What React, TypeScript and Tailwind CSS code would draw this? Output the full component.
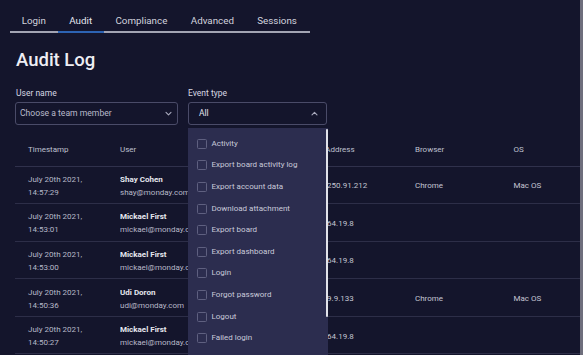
import React from "react";

const tabs = ["Login", "Audit", "Compliance", "Advanced", "Sessions"];

const rows = [
  { d: "July 20th 2021,", t: "14:57:29", name: "Shay Cohen", email: "shay@monday.com", ip: "82.250.91.212", browser: "Chrome", os: "Mac OS" },
  { d: "July 20th 2021,", t: "14:53:01", name: "Mickael First", email: "mickael@monday.com", ip: "5.164.19.8", browser: "", os: "" },
  { d: "July 20th 2021,", t: "14:53:00", name: "Mickael First", email: "mickael@monday.com", ip: "5.164.19.8", browser: "", os: "" },
  { d: "July 20th 2021,", t: "14:50:36", name: "Udi Doron", email: "udi@monday.com", ip: "31.9.9.133", browser: "Chrome", os: "Mac OS" },
  { d: "July 20th 2021,", t: "14:50:27", name: "Mickael First", email: "mickael@monday.com", ip: "5.164.19.8", browser: "", os: "" },
];

const events = [
  "Activity",
  "Export board activity log",
  "Export account data",
  "Download attachment",
  "Export board",
  "Export dashboard",
  "Login",
  "Forgot password",
  "Logout",
  "Failed login",
];

function Chevron({ up }: { up?: boolean }) {
  return (
    <svg width="7" height="5" viewBox="0 0 7 5" fill="none">
      {up ? (
        <path d="M1 3.8 L3.5 1.3 L6 3.8" stroke="#a9aabd" strokeWidth="1.1" strokeLinecap="round" strokeLinejoin="round" />
      ) : (
        <path d="M1 1.3 L3.5 3.8 L6 1.3" stroke="#a9aabd" strokeWidth="1.1" strokeLinecap="round" strokeLinejoin="round" />
      )}
    </svg>
  );
}

export default function App() {
  return (
    <div
      className="relative flex h-[355px] w-[583px] overflow-hidden bg-[#14152c] text-[#c4c5d3]"
      style={{ fontFamily: "Roboto, 'Liberation Sans', sans-serif" }}
    >
      <div className="flex min-w-0 flex-1 flex-col">
        {/* Tabs */}
        <div className="ml-[10px] mt-[10px] flex w-[300px] border-b-[2px] border-[#a3a4b3]">
          {tabs.map((t) => (
            <div
              key={t}
              className={`relative flex h-[21px] items-center px-[11.7px] pt-[1px] text-[9.8px] ${
                t === "Audit" ? "text-[#e4e5ee]" : "text-[#d2d3de]"
              }`}
            >
              {t}
              {t === "Audit" && (
                <span className="absolute bottom-[-2px] left-0 right-0 h-[2px] bg-[#2d63b3]" />
              )}
            </div>
          ))}
        </div>

        {/* Title */}
        <div className="ml-[16px] mt-[15.5px] h-[22px] text-[18.5px] font-medium leading-[22px] text-[#eeeef4]">
          Audit Log
        </div>

        {/* Filters */}
        <div className="ml-[15px] mt-[17px] flex gap-[10px]">
          <div className="flex w-[163px] flex-col">
            <div className="h-[11px] pl-[1px] text-[8.5px] leading-[11px] text-[#d6d7e2]">User name</div>
            <div className="mt-[3px] flex h-[23px] items-center justify-between rounded-[3px] border border-[#4a4b68] pl-[4px] pr-[5px] text-[8.6px] text-[#b9bacb]">
              <span>Choose a team member</span>
              <Chevron />
            </div>
          </div>
          <div className="relative flex w-[139px] flex-col">
            <div className="h-[11px] text-[8.5px] leading-[11px] text-[#d6d7e2]">Event type</div>
            <div className="mt-[3px] flex h-[23px] items-center justify-between rounded-[3px] border border-[#4a4b68] pl-[10px] pr-[8px] text-[8.5px] text-[#e2e3ec]">
              <span>All</span>
              <Chevron up />
            </div>
          </div>
        </div>

        {/* Table */}
        <div className="ml-[15px] mt-[10px] flex flex-col">
          <div className="grid h-[32px] grid-cols-[92px_196px_99px_98.5px_1fr] items-center border-b border-[#30314c] pl-[13px] text-[8px] text-[#bfc0cf]">
            <div>Timestamp</div>
            <div>User</div>
            <div>IP Address</div>
            <div>Browser</div>
            <div>OS</div>
          </div>
          {rows.map((r, i) => (
            <div
              key={i}
              className="grid h-[37.6px] grid-cols-[92px_196px_99px_98.5px_1fr] items-center border-b border-[#2d2e48] pl-[13px] pt-[2px] text-[8px] leading-[13px]"
            >
              <div className="flex flex-col text-[#b7b8c8]">
                <span>{r.d}</span>
                <span>{r.t}</span>
              </div>
              <div className="flex flex-col overflow-hidden whitespace-nowrap">
                <span className="font-bold text-[#e6e7ef]">{r.name}</span>
                <span className="text-[#b7b8c8]">{r.email}</span>
              </div>
              <div className="whitespace-nowrap text-[#c4c5d3]">{r.ip}</div>
              <div className="text-[#c4c5d3]">{r.browser}</div>
              <div className="text-[#c4c5d3]">{r.os}</div>
            </div>
          ))}
        </div>
      </div>

      {/* right scrollbar strip */}
      <div className="w-[3px] flex-none bg-[#6e6e7c]" />

      {/* Dropdown menu */}
      <div className="absolute left-[188px] top-[128px] h-[240px] w-[139.5px] bg-[#2c2d4f] pt-[5px]">
        {events.map((e) => (
          <div key={e} className="flex h-[21.6px] items-center gap-[4.5px] pl-[9px] text-[8px] text-[#c9cada]">
            <span className="h-[10px] w-[10px] rounded-[1.5px] border border-[#5f6080]" />
            <span>{e}</span>
          </div>
        ))}
        <div className="absolute right-0 top-[1px] h-[188px] w-[2px] rounded-full bg-[#e2e3ea]" />
      </div>
    </div>
  );
}
